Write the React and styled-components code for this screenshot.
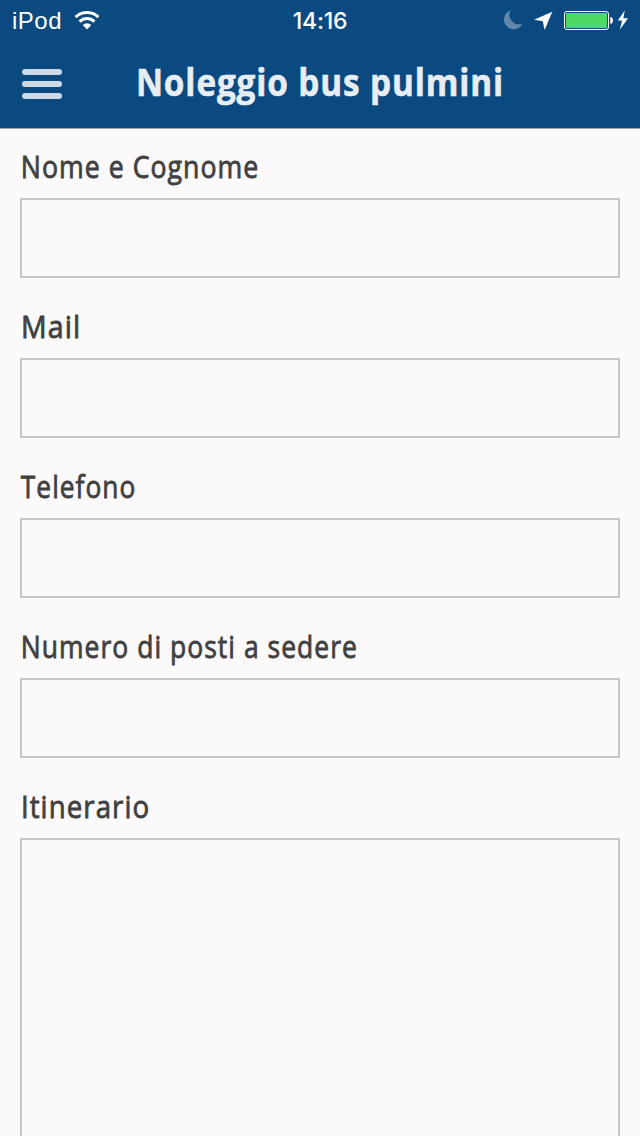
import React from 'react';
import styled, { createGlobalStyle } from 'styled-components';

const GlobalStyle = createGlobalStyle`
  *, *::before, *::after {
    box-sizing: border-box;
  }

  body {
    margin: 0;
    background: #fbf9fa;
    overflow: hidden;
  }
`;

const Screen = styled.div`
  height: 100vh;
  overflow: hidden;
  background: #fbf9fa;
  color: #404040;
  font-family: 'Open Sans', 'Noto Sans', sans-serif;
`;

const TopBar = styled.header`
  height: 129px;
  background: #0b4a80;
  border-bottom: 1px solid #a0a4ac;
`;

const StatusBar = styled.div`
  display: grid;
  grid-template-columns: 1fr auto 1fr;
  align-items: start;
  height: 40px;
  padding: 0 12px;
  color: #fff;
  font-family: 'Inter', 'Liberation Sans', sans-serif;
  font-size: 24px;
  line-height: 42px;
`;

const Carrier = styled.div`
  display: flex;
  align-items: center;
  gap: 12px;
  font-family: 'Liberation Sans', Arial, sans-serif;
  letter-spacing: 0.5px;
`;

const Clock = styled.div`
  font-size: 23px;
  font-weight: 500;
  letter-spacing: -0.2px;
`;

const StatusIcons = styled.div`
  display: flex;
  justify-content: flex-end;
  height: 40px;
`;

const NavBar = styled.div`
  display: grid;
  grid-template-columns: 40px 1fr 40px;
  align-items: center;
  height: 88px;
  padding: 0 22px;
`;

const MenuButton = styled.button`
  display: flex;
  flex-direction: column;
  gap: 6px;
  width: 40px;
  padding: 0;
  border: none;
  background: transparent;
  cursor: pointer;
`;

const MenuBar = styled.span`
  height: 6px;
  border-radius: 3px;
  background: #cddae5;
`;

const Title = styled.h1`
  margin: 0;
  padding-bottom: 6px;
  color: #e8edf3;
  text-align: center;
  font-size: 38px;
  font-weight: 700;
  letter-spacing: 1px;
  line-height: 52px;
  white-space: nowrap;
  transform: scaleX(0.876);
  -webkit-text-stroke: 0.6px #e8edf3;
`;

const Form = styled.form`
  display: flex;
  flex-direction: column;
  gap: 30px;
  padding: 18px 20px 0;
`;

const Field = styled.div`
  display: flex;
  flex-direction: column;
  height: 130px;
`;

const Label = styled.label`
  flex: none;
  height: 51px;
  padding-left: 1px;
  font-size: 31px;
  letter-spacing: 1.2px;
  line-height: 38px;
  white-space: nowrap;
  transform: scaleX(${({ $condense }) => $condense});
  transform-origin: 0 50%;
  -webkit-text-stroke: 0.8px #404040;
`;

const Input = styled.input`
  flex: none;
  width: 100%;
  height: 80px;
  padding: 0 16px;
  border: 2px solid #c9c8c9;
  border-radius: 0;
  background: transparent;
  color: inherit;
  font: inherit;
  outline: none;
`;

const TextArea = styled.textarea`
  flex: none;
  width: 100%;
  height: 400px;
  padding: 16px;
  border: 2px solid #c9c8c9;
  border-radius: 0;
  background: transparent;
  color: inherit;
  font: inherit;
  outline: none;
  resize: none;
`;

const fields = [
  { id: 'nome', label: 'Nome e Cognome', type: 'text', condense: 0.86 },
  { id: 'mail', label: 'Mail', type: 'email', condense: 0.92 },
  { id: 'telefono', label: 'Telefono', type: 'tel', condense: 0.849 },
  { id: 'posti', label: 'Numero di posti a sedere', type: 'text', condense: 0.854 },
];

const WifiIcon = () => (
  <svg width="26" height="20" viewBox="0 0 26 20" fill="none" stroke="#fff" strokeWidth="3">
    <path d="M1.6 6.1a16.4 16.4 0 0 1 22.8 0" />
    <path d="M5.6 10.6a10.6 10.6 0 0 1 14.8 0" />
    <path d="M13 18.4l-4.3-4.4a6.2 6.2 0 0 1 8.6 0z" fill="#fff" stroke="none" />
  </svg>
);

// moon, location, battery and charging bolt share one strip
const DeviceIcons = () => (
  <svg width="128" height="40" viewBox="500 0 128 40" fill="#fff">
    <path d="M510.5 10.5a9.6 9.6 0 1 0 11.9 12.9a9.3 9.3 0 0 1-11.9-12.9z" opacity="0.35" />
    <path d="M552.3 11.8L534 19.8l8.8 1.4l1.8 8.8z" />
    <rect x="564.5" y="11.5" width="44" height="18" rx="2.5" fill="none" stroke="#fff" />
    <rect x="566" y="13" width="41" height="15" rx="1" fill="#4cd964" />
    <path d="M610.3 17c3.6.2 3.6 6.8 0 7z" />
    <path d="M624.8 10.5l-7 10h4.3l-2.3 9.2l8.2-11.4h-4.6z" />
  </svg>
);

const App = () => {
  return (
    <Screen>
      <GlobalStyle />
      <TopBar>
        <StatusBar>
          <Carrier>
            iPod
            <WifiIcon />
          </Carrier>
          <Clock>14:16</Clock>
          <StatusIcons>
            <DeviceIcons />
          </StatusIcons>
        </StatusBar>
        <NavBar>
          <MenuButton type="button" aria-label="Menu">
            <MenuBar />
            <MenuBar />
            <MenuBar />
          </MenuButton>
          <Title>Noleggio bus pulmini</Title>
        </NavBar>
      </TopBar>
      <Form>
        {fields.map(({ id, label, type, condense }) => (
          <Field key={id}>
            <Label htmlFor={id} $condense={condense}>{label}</Label>
            <Input id={id} name={id} type={type} />
          </Field>
        ))}
        <Field>
          <Label htmlFor="itinerario" $condense={0.892}>Itinerario</Label>
          <TextArea id="itinerario" name="itinerario" />
        </Field>
      </Form>
    </Screen>
  );
};

export default App;
